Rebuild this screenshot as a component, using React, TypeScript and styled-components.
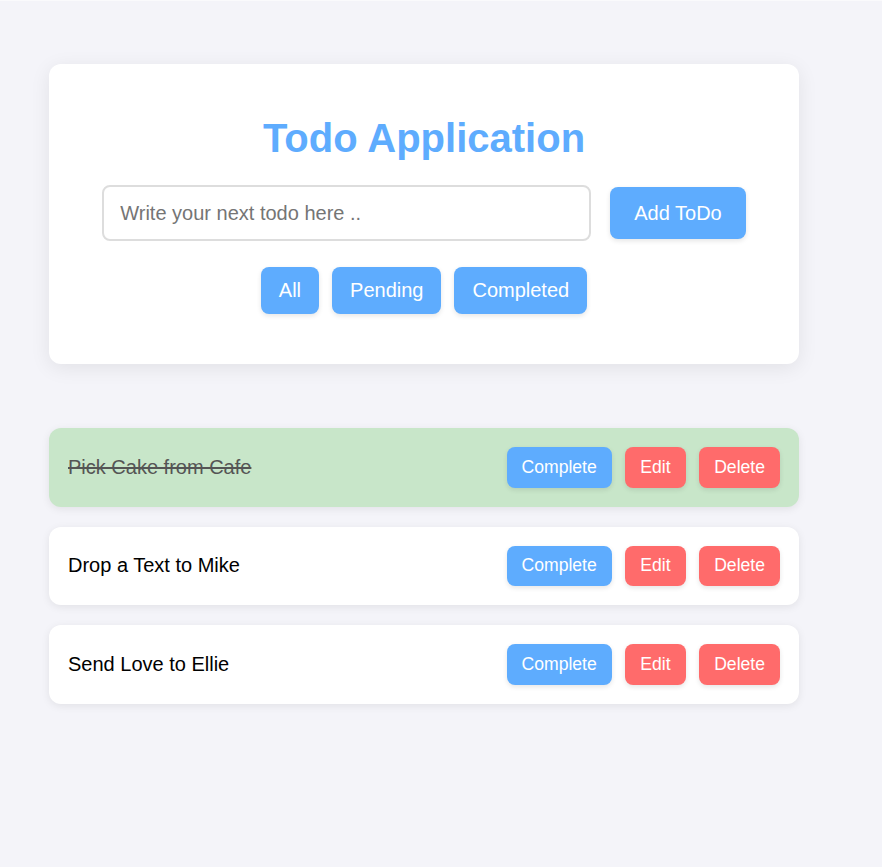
import React from "react";
import styled, { createGlobalStyle } from "styled-components";

const GlobalStyle = createGlobalStyle`
  html, body {
    margin: 0;
    padding: 0;
    background: #f4f4f9;
    font-family: "Liberation Sans", Arial, sans-serif;
  }
  body {
    min-height: 867px;
    border-top: 1px solid #fafafc;
  }
  * { box-sizing: border-box; }
`;

const Page = styled.div`
  width: 750px;
  margin-left: 49px;
  padding-top: 63px;
`;

const Card = styled.div`
  background: #fff;
  border-radius: 12px;
  box-shadow: 0 4px 20px rgba(0, 0, 0, 0.08);
  padding: 51px 50px 50px;
  display: flex;
  flex-direction: column;
  align-items: center;
`;

const Title = styled.h1`
  margin: 0 0 24px;
  font-size: 40px;
  font-weight: 700;
  line-height: 46px;
  color: #5eacfe;
`;

const InputRow = styled.div`
  display: flex;
  align-items: center;
  gap: 19px;
  margin-bottom: 26px;
`;

const TodoInput = styled.input`
  width: 489px;
  height: 56px;
  border: 2px solid #dddddd;
  border-radius: 8px;
  padding: 0 16px;
  font-family: "Liberation Sans", Arial, sans-serif;
  font-size: 20px;
  color: #333;
  outline: none;
  &::placeholder {
    color: #757575;
  }
`;

const BlueButton = styled.button<{ $h?: number; $px?: number }>`
  height: ${(p) => p.$h ?? 47}px;
  padding: 0 ${(p) => p.$px ?? 18}px;
  border: none;
  border-radius: 8px;
  background: #5eacfe;
  color: #fff;
  font-family: "Liberation Sans", Arial, sans-serif;
  font-size: 20px;
  box-shadow: 0 2px 5px rgba(0, 0, 0, 0.1);
  cursor: pointer;
`;

const FilterRow = styled.div`
  display: flex;
  gap: 13px;
`;

const List = styled.div`
  margin-top: 64px;
  display: flex;
  flex-direction: column;
  gap: 20px;
`;

const Item = styled.div<{ $done?: boolean }>`
  display: flex;
  align-items: center;
  justify-content: space-between;
  padding: 19px 19px 19px 19px;
  border-radius: 12px;
  background: ${(p) => (p.$done ? "#c8e6c9" : "#ffffff")};
  box-shadow: 0 2px 8px rgba(0, 0, 0, 0.08);
`;

const ItemText = styled.span<{ $done?: boolean }>`
  font-size: 20px;
  color: ${(p) => (p.$done ? "#555555" : "#000000")};
  text-decoration: ${(p) => (p.$done ? "line-through" : "none")};
`;

const Actions = styled.div`
  display: flex;
  gap: 13.5px;
`;

const ActionButton = styled.button<{ $kind: "blue" | "red" }>`
  height: 40.5px;
  padding: 0 15px;
  border: none;
  border-radius: 8px;
  background: ${(p) => (p.$kind === "blue" ? "#5eacfe" : "#ff6b6b")};
  color: #fff;
  font-family: "Liberation Sans", Arial, sans-serif;
  font-size: 17.6px;
  box-shadow: 0 2px 5px rgba(0, 0, 0, 0.1);
  cursor: pointer;
`;

const todos = [
  { text: "Pick Cake from Cafe", done: true },
  { text: "Drop a Text to Mike", done: false },
  { text: "Send Love to Ellie", done: false },
];

export default function App() {
  return (
    <>
      <GlobalStyle />
      <Page>
        <Card>
          <Title>Todo Application</Title>
          <InputRow>
            <TodoInput placeholder="Write your next todo here .." />
            <BlueButton $h={52} $px={24}>Add ToDo</BlueButton>
          </InputRow>
          <FilterRow>
            <BlueButton>All</BlueButton>
            <BlueButton>Pending</BlueButton>
            <BlueButton>Completed</BlueButton>
          </FilterRow>
        </Card>
        <List>
          {todos.map((t) => (
            <Item key={t.text} $done={t.done}>
              <ItemText $done={t.done}>{t.text}</ItemText>
              <Actions>
                <ActionButton $kind="blue">Complete</ActionButton>
                <ActionButton $kind="red">Edit</ActionButton>
                <ActionButton $kind="red">Delete</ActionButton>
              </Actions>
            </Item>
          ))}
        </List>
      </Page>
    </>
  );
}
